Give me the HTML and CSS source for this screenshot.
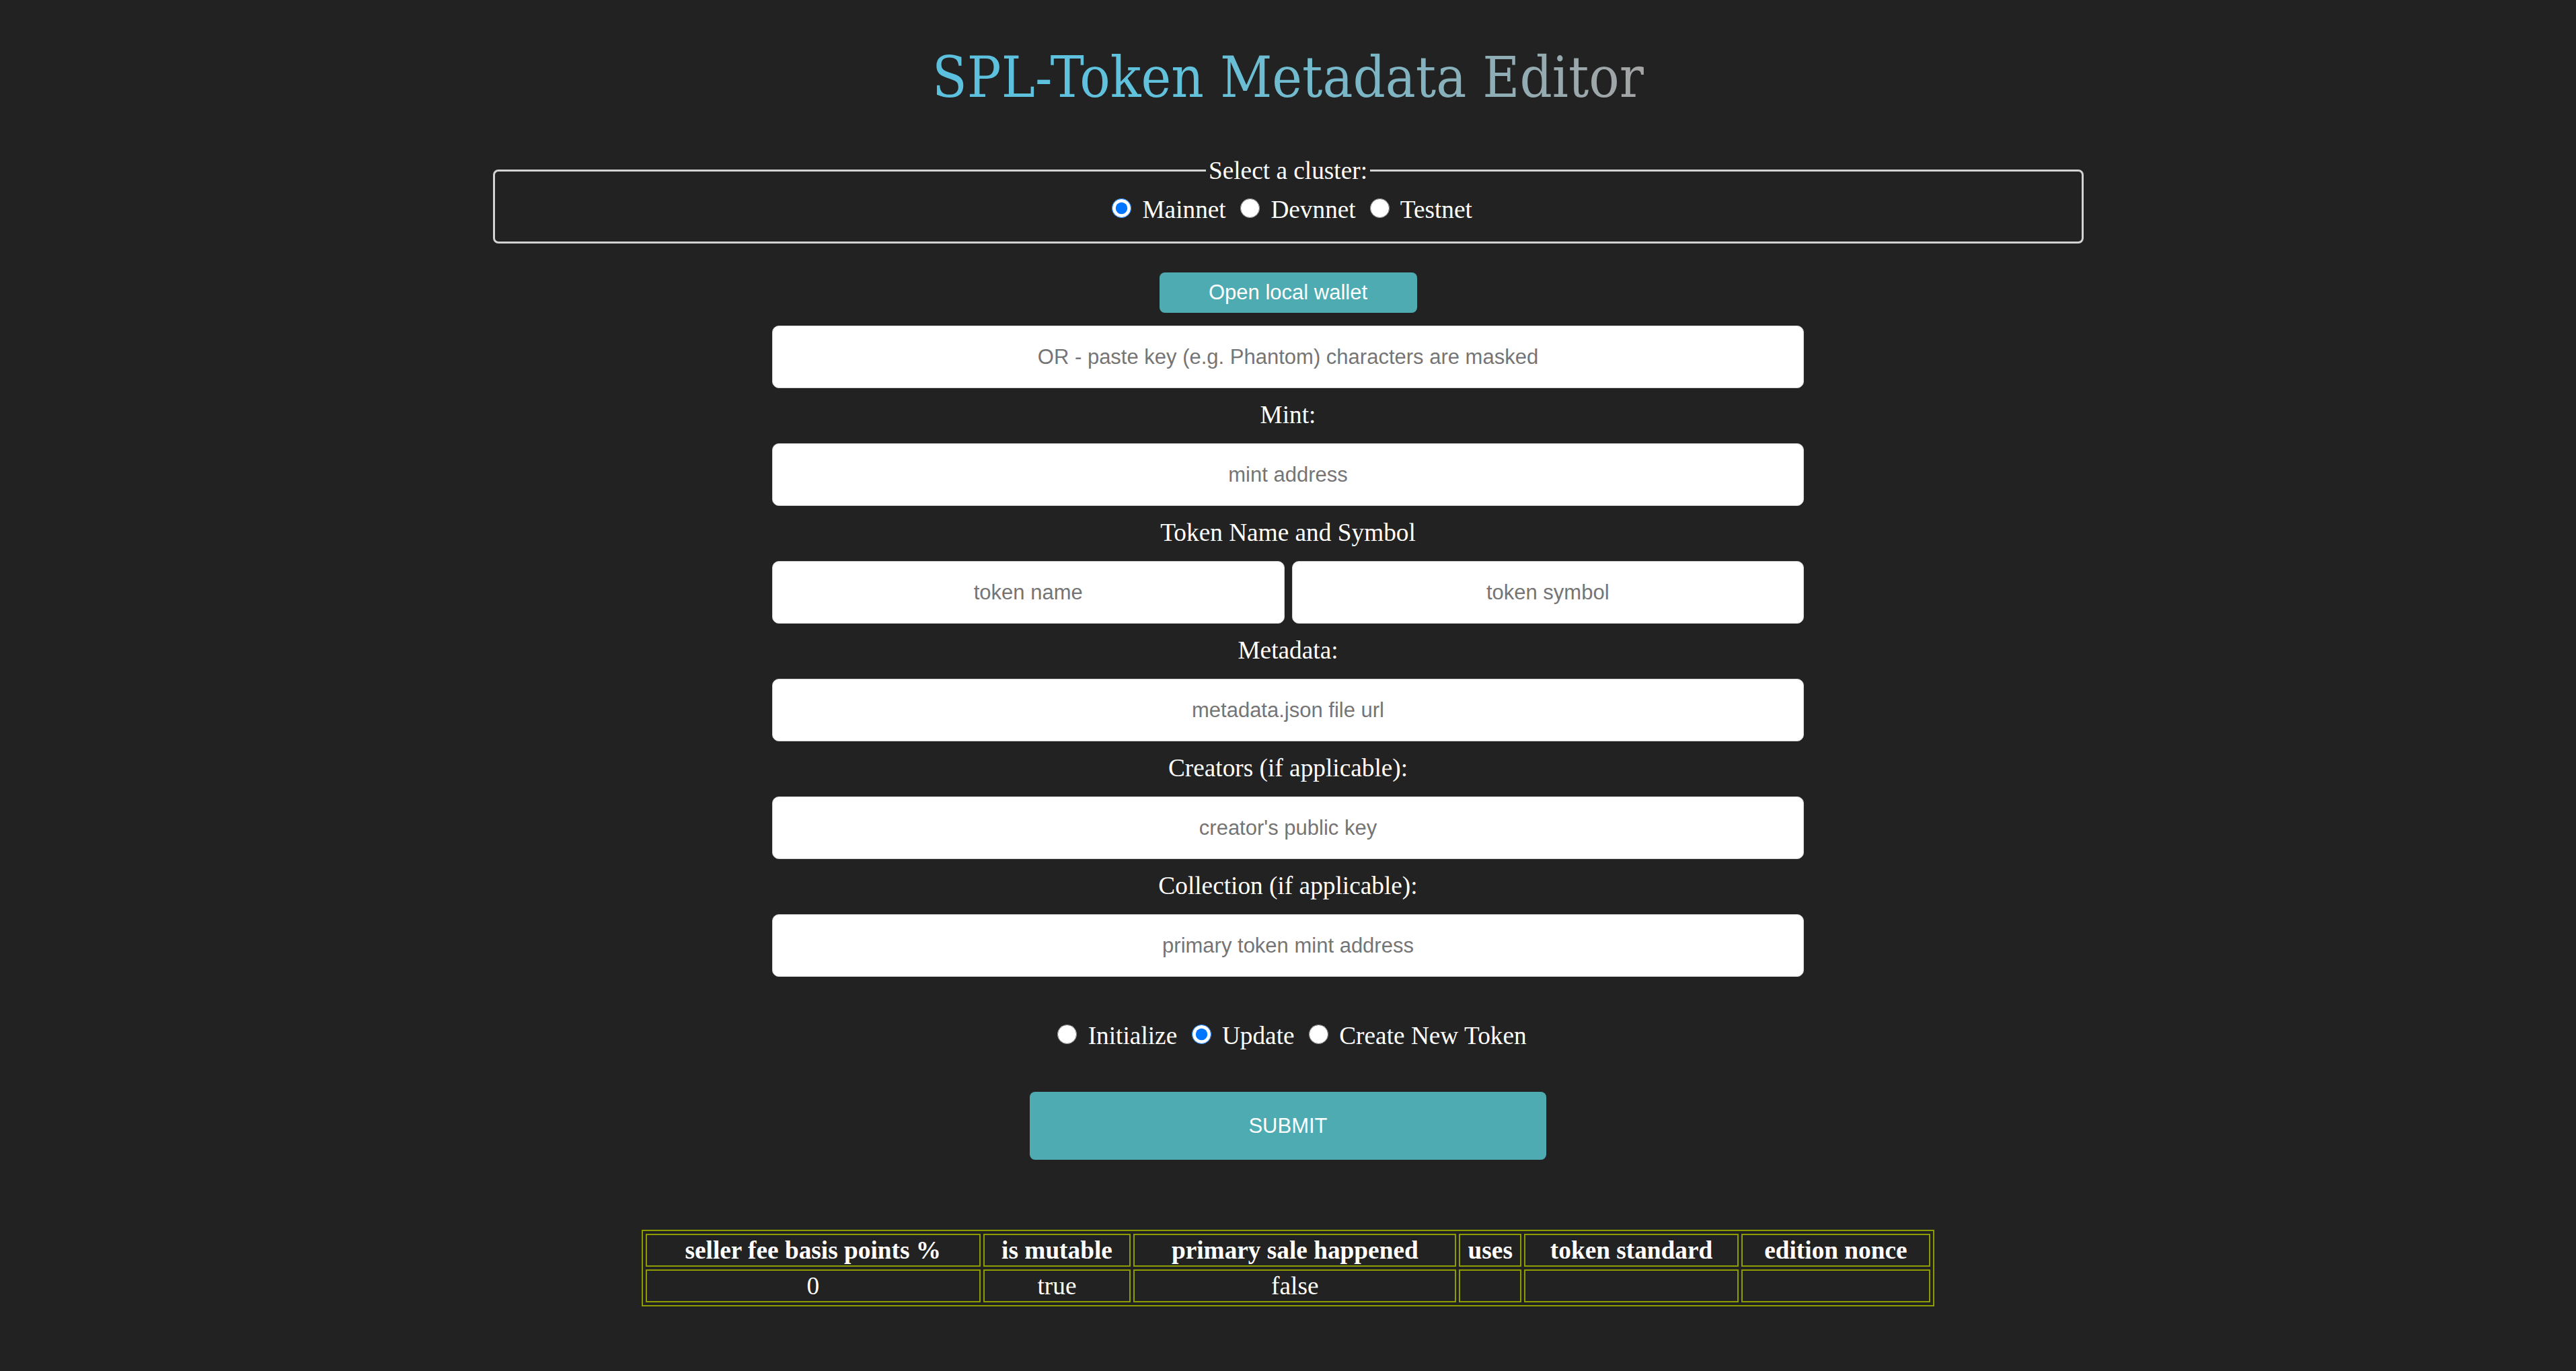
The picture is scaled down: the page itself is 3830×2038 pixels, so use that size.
FILE: index.html
```html
<!DOCTYPE html>
<html lang="en">
<head>
<meta charset="utf-8">
<title>SPL-Token Metadata Editor</title>
<link rel="stylesheet" href="styles.css">
</head>
<body>
<main class="app">
  <h1 class="title">SPL-Token Metadata Editor</h1>

  <fieldset class="cluster">
    <legend class="cluster-legend">Select a cluster:</legend>
    <div class="radio-row">
      <input class="radio" type="radio" name="cluster" id="mainnet" checked> <label for="mainnet">Mainnet</label>
      <input class="radio" type="radio" name="cluster" id="devnet"> <label for="devnet">Devnnet</label>
      <input class="radio" type="radio" name="cluster" id="testnet"> <label for="testnet">Testnet</label>
    </div>
  </fieldset>

  <section class="form">
    <button class="wallet-btn" type="button">Open local wallet</button>
    <input class="field" type="password" placeholder="OR - paste key (e.g. Phantom) characters are masked">

    <div class="label">Mint:</div>
    <input class="field" type="text" placeholder="mint address">

    <div class="label">Token Name and Symbol</div>
    <div class="pair">
      <input class="field half" type="text" placeholder="token name">
      <input class="field half" type="text" placeholder="token symbol">
    </div>

    <div class="label">Metadata:</div>
    <input class="field" type="text" placeholder="metadata.json file url">

    <div class="label">Creators (if applicable):</div>
    <input class="field" type="text" placeholder="creator's public key">

    <div class="label">Collection (if applicable):</div>
    <input class="field" type="text" placeholder="primary token mint address">

    <div class="radio-row action-row">
      <input class="radio" type="radio" name="action" id="init"> <label for="init">Initialize</label>
      <input class="radio" type="radio" name="action" id="update" checked> <label for="update">Update</label>
      <input class="radio" type="radio" name="action" id="create"> <label for="create">Create New Token</label>
    </div>

    <button class="submit-btn" type="button">SUBMIT</button>
  </section>

  <table class="info-table">
    <thead>
      <tr>
        <th>seller fee basis points %</th>
        <th>is mutable</th>
        <th>primary sale happened</th>
        <th>uses</th>
        <th>token standard</th>
        <th>edition nonce</th>
      </tr>
    </thead>
    <tbody>
      <tr>
        <td>0</td>
        <td>true</td>
        <td>false</td>
        <td></td>
        <td></td>
        <td></td>
      </tr>
    </tbody>
  </table>
</main>
</body>
</html>
```
FILE: styles.css
```css
* {
  box-sizing: border-box;
}

html, body {
  margin: 0;
  padding: 0;
  background: #222222;
}

body {
  color: #ffffff;
  font-family: "Liberation Serif", "Times New Roman", serif;
  font-size: 37.3px;
  line-height: 43px;
  min-height: 2038px;
}

.app {
  display: flex;
  flex-direction: column;
  align-items: center;
  padding-top: 65px;
}

.title {
  margin: 0;
  width: fit-content;
  font-family: "DejaVu Serif Condensed", "DejaVu Serif", serif;
  font-stretch: condensed;
  font-weight: normal;
  font-size: 84px;
  line-height: 100px;
  background: linear-gradient(90deg, #5bc0de 0%, #62c2dc 35%, #a4a4a4 100%);
  -webkit-background-clip: text;
  background-clip: text;
  color: transparent;
}

.cluster {
  width: 2365px;
  margin: 67px 0 0;
  padding: 13px 28px 26px;
  border: 3px solid #d2d2d2;
  border-radius: 8px;
  text-align: center;
}

.cluster-legend {
  margin: 0 auto;
  padding: 0 4px;
  line-height: 43px;
}

.radio-row {
  text-align: center;
  line-height: 43px;
}

.radio {
  width: 29px;
  height: 29px;
  margin: 7px 7px 2px 12px;
  vertical-align: baseline;
}

.form {
  display: flex;
  flex-direction: column;
  align-items: center;
  width: 1534px;
}

.wallet-btn {
  margin-top: 43px;
  width: 383px;
  height: 60px;
  border: none;
  border-radius: 8px;
  background: #4dabb1;
  color: #ffffff;
  font-family: "Liberation Sans", Arial, sans-serif;
  font-size: 31px;
}

.field {
  display: block;
  width: 1534px;
  height: 93px;
  margin-top: 19px;
  border: 1px solid #d6d6d6;
  border-radius: 10px;
  background: #ffffff;
  color: #222;
  text-align: center;
  font-family: "Liberation Sans", Arial, sans-serif;
  font-size: 31px;
  padding: 0 20px;
}

.field::placeholder {
  color: #757575;
}

.label {
  margin-top: 18px;
  margin-bottom: -19px;
  padding-bottom: 21px;
  line-height: 43px;
}

.pair {
  display: flex;
  gap: 11px;
  width: 1534px;
  margin-top: 19px;
}

.pair .field.half {
  flex: 1;
  width: auto;
  margin-top: 0;
}

.action-row {
  margin-top: 64px;
}

.submit-btn {
  margin-top: 62px;
  width: 768px;
  height: 101px;
  border: none;
  border-radius: 8px;
  background: #4dabb1;
  color: #ffffff;
  font-family: "Liberation Sans", Arial, sans-serif;
  font-size: 31px;
}

.info-table {
  margin-top: 104px;
  width: 1922px;
  border: 2px solid #8d9c00;
  border-spacing: 4px;
  text-align: center;
}

.info-table th,
.info-table td {
  border: 2px solid #8d9c00;
  padding: 1px;
  line-height: 43px;
  font-size: 37.3px;
}

.info-table th {
  font-weight: bold;
}
```
